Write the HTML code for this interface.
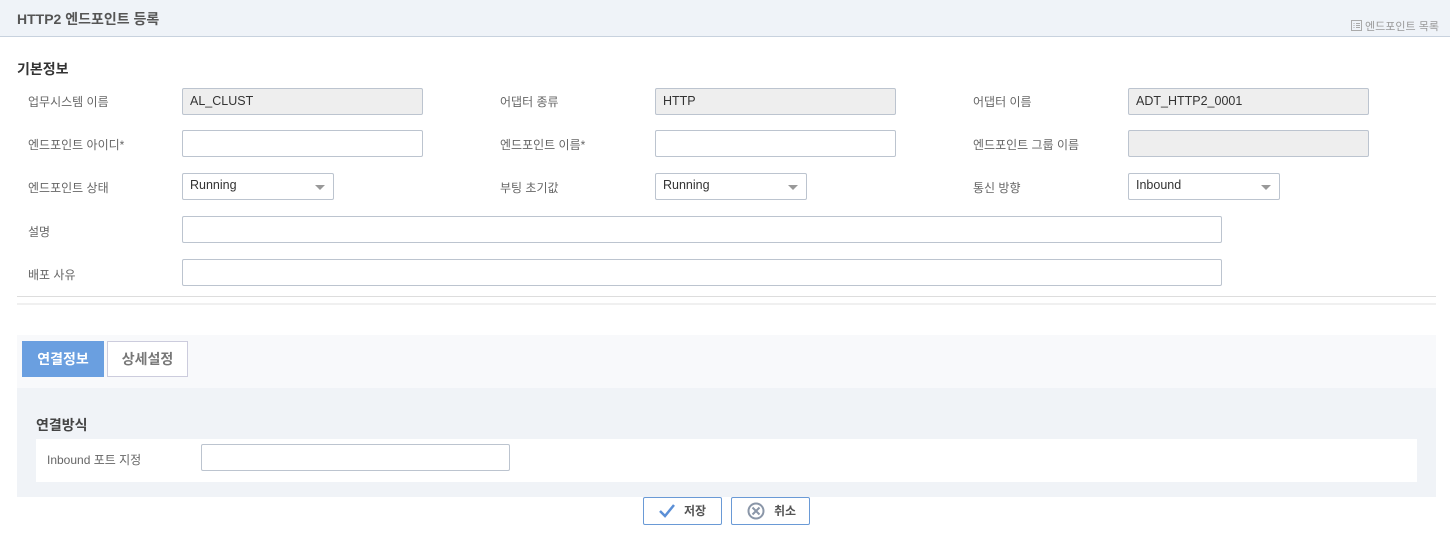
<!DOCTYPE html>
<html><head><meta charset="utf-8"><style>
*{box-sizing:border-box;margin:0;padding:0}
body{width:1450px;height:547px;background:#fff;font-family:"Liberation Sans","Noto Sans CJK KR",sans-serif;position:relative;overflow:hidden;color:#555}
.a{position:absolute}
.hdr{left:0;top:0;width:1450px;height:37px;background:#eff3f8;border-bottom:1px solid #c8d2de}
.lbl{font-size:12px;color:#666}
.in{height:27px;border:1px solid #bcc4cf;border-radius:2px;background:#fff;font-size:12.5px;color:#333;padding:0 7px;line-height:25px}
.ro{background:#eeeeee}
.sel{width:152px}
.sel:after{content:"";position:absolute;right:8px;top:11px;border-left:5px solid transparent;border-right:5px solid transparent;border-top:5px solid #999}
.btn{height:28px;border:1px solid #6a9ad6;border-radius:2px;background:#fff;font-size:12px;font-weight:bold;color:#555;line-height:26px}
</style></head><body>
<div class="a hdr"></div>
<div class="a" style="left:17px;top:9px;font-size:14px;font-weight:bold;color:#555">HTTP2 엔드포인트 등록</div>
<div class="a" style="left:1351px;top:18px;font-size:11px;color:#999">
<svg width="11" height="11" style="vertical-align:-1px"><rect x=".5" y=".5" width="10" height="10" fill="none" stroke="#aaa"/><path d="M2.5 3.5h1M5 3.5h4M2.5 5.5h1M5 5.5h4M2.5 7.5h1M5 7.5h4" stroke="#aaa"/></svg> 엔드포인트 목록</div>
<div class="a" style="left:17px;top:59px;font-size:14px;font-weight:bold;color:#333">기본정보</div>

<div class="a lbl" style="left:28px;top:93px">업무시스템 이름</div>
<div class="a in ro" style="left:182px;top:88px;width:241px">AL_CLUST</div>
<div class="a lbl" style="left:500px;top:93px">어댑터 종류</div>
<div class="a in ro" style="left:655px;top:88px;width:241px">HTTP</div>
<div class="a lbl" style="left:973px;top:93px">어댑터 이름</div>
<div class="a in ro" style="left:1128px;top:88px;width:241px">ADT_HTTP2_0001</div>

<div class="a lbl" style="left:28px;top:136px">엔드포인트 아이디*</div>
<div class="a in" style="left:182px;top:130px;width:241px"></div>
<div class="a lbl" style="left:500px;top:136px">엔드포인트 이름*</div>
<div class="a in" style="left:655px;top:130px;width:241px"></div>
<div class="a lbl" style="left:973px;top:136px">엔드포인트 그룹 이름</div>
<div class="a in ro" style="left:1128px;top:130px;width:241px"></div>

<div class="a lbl" style="left:28px;top:179px">엔드포인트 상태</div>
<div class="a in sel" style="left:182px;top:173px;line-height:23px">Running</div>
<div class="a lbl" style="left:500px;top:179px">부팅 초기값</div>
<div class="a in sel" style="left:655px;top:173px;line-height:23px">Running</div>
<div class="a lbl" style="left:973px;top:179px">통신 방향</div>
<div class="a in sel" style="left:1128px;top:173px;line-height:23px">Inbound</div>

<div class="a lbl" style="left:28px;top:223px">설명</div>
<div class="a in" style="left:182px;top:216px;width:1040px"></div>
<div class="a lbl" style="left:28px;top:266px">배포 사유</div>
<div class="a in" style="left:182px;top:259px;width:1040px"></div>

<div class="a" style="left:17px;top:296px;width:1419px;height:1px;background:#ddd"></div>
<div class="a" style="left:17px;top:303px;width:1419px;height:2px;background:#f0f0f0"></div>

<div class="a" style="left:17px;top:335px;width:1419px;height:53px;background:#f8f9fb"></div>
<div class="a" style="left:17px;top:388px;width:1419px;height:109px;background:#f0f3f7"></div>
<div class="a" style="left:22px;top:341px;width:82px;height:36px;background:#6a9fe0;color:#fff;font-size:14px;font-weight:bold;text-align:center;line-height:36px">연결정보</div>
<div class="a" style="left:107px;top:341px;width:81px;height:36px;background:#fff;border:1px solid #ccd;color:#777;font-size:14px;font-weight:bold;text-align:center;line-height:34px">상세설정</div>
<div class="a" style="left:36px;top:415px;font-size:14px;font-weight:bold;color:#444">연결방식</div>
<div class="a" style="left:36px;top:439px;width:1381px;height:43px;background:#fff"></div>
<div class="a lbl" style="left:47px;top:451px">Inbound 포트 지정</div>
<div class="a in" style="left:201px;top:444px;width:309px"></div>

<div class="a btn" style="left:643px;top:497px;width:79px">
<svg class="a" style="left:15px;top:6px" width="16" height="14"><path d="M1 7l5 5L15 1" fill="none" stroke="#5b8fd6" stroke-width="2.5"/></svg>
<span class="a" style="left:40px;top:0">저장</span></div>
<div class="a btn" style="left:731px;top:497px;width:79px">
<svg class="a" style="left:15px;top:4px" width="18" height="18"><circle cx="9" cy="9" r="7.5" fill="none" stroke="#8a96a8" stroke-width="2"/><path d="M5.5 5.5l7 7M12.5 5.5l-7 7" stroke="#8a96a8" stroke-width="2"/></svg>
<span class="a" style="left:42px;top:0">취소</span></div>
</body></html>
